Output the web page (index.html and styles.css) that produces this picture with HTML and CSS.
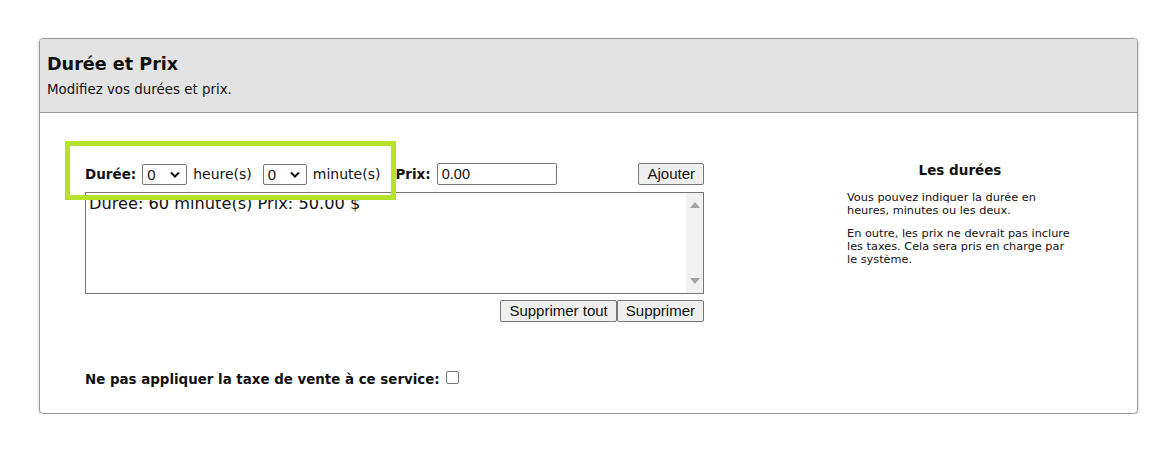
FILE: index.html
```html
<!DOCTYPE html>
<html lang="fr">
<head>
<meta charset="utf-8">
<title>Durée et Prix</title>
<link rel="stylesheet" href="styles.css">
</head>
<body>
<div class="card">
  <div class="card-head">
    <h2 class="title">Durée et Prix</h2>
    <p class="subtitle">Modifiez vos durées et prix.</p>
  </div>
  <div class="card-body">
    <div class="main-col">
      <div class="form-row">
        <label class="lbl">Durée:</label>
        <span class="sel"><span class="sel-val">0</span><svg class="chev" width="10" height="7" viewBox="0 0 10 7"><path d="M1 1.5 L5 5.5 L9 1.5" fill="none" stroke="#111" stroke-width="2"/></svg></span>
        <span class="unit">heure(s)</span>
        <span class="sel sel2"><span class="sel-val">0</span><svg class="chev" width="10" height="7" viewBox="0 0 10 7"><path d="M1 1.5 L5 5.5 L9 1.5" fill="none" stroke="#111" stroke-width="2"/></svg></span>
        <span class="unit unit-last">minute(s)</span>
        <label class="lbl lbl-prix">Prix:</label>
        <span class="input">0.00</span>
        <span class="spacer"></span>
        <button class="btn">Ajouter</button>
      </div>
      <div class="listbox">
        <div class="list-items">
          <div class="option">Durée: 60 minute(s) Prix: 50.00 $</div>
        </div>
        <div class="scrollbar">
          <svg width="10" height="6" viewBox="0 0 10 6"><path d="M0 6 L5 0 L10 6 Z" fill="#a3a3a3"/></svg>
          <svg width="10" height="6" viewBox="0 0 10 6"><path d="M0 0 L5 6 L10 0 Z" fill="#a3a3a3"/></svg>
        </div>
      </div>
      <div class="btn-row">
        <button class="btn">Supprimer tout</button><button class="btn">Supprimer</button>
      </div>
      <div class="tax-row">
        <span class="lbl">Ne pas appliquer la taxe de vente à ce service:</span>
        <span class="checkbox"></span>
      </div>
    </div>
    <div class="side-col">
      <h3 class="side-title">Les durées</h3>
      <p class="side-text">Vous pouvez indiquer la durée en heures, minutes ou les deux.</p>
      <p class="side-text">En outre, les prix ne devrait pas inclure les taxes. Cela sera pris en charge par le système.</p>
    </div>
  </div>
</div>
<div class="highlight"></div>
</body>
</html>
```

FILE: styles.css
```css
* { box-sizing: border-box; }
body {
  margin: 0;
  background: #fff;
  font-family: "DejaVu Sans", Verdana, sans-serif;
  color: #111;
  position: relative;
}
.card {
  margin: 38px 0 0 39px;
  width: 1099px;
  height: 376px;
  border: 1px solid #9a9a9a;
  border-radius: 4px;
  box-shadow: 0 1px 3px rgba(0,0,0,0.25);
  display: flex;
  flex-direction: column;
}
.card-head {
  background: #e3e3e3;
  border-bottom: 1px solid #9a9a9a;
  height: 74px;
  padding: 14px 7px 0;
  border-radius: 3px 3px 0 0;
}
.title {
  margin: 0;
  font-size: 17.6px;
  font-weight: bold;
  line-height: 22px;
}
.subtitle {
  margin: 6px 0 0;
  font-size: 13.4px;
  line-height: 17px;
}
.card-body {
  display: flex;
  padding: 50px 0 0 45px;
}
.main-col {
  width: 619px;
}
.form-row {
  display: flex;
  align-items: center;
  height: 22px;
}
.lbl {
  font-weight: bold;
  font-size: 13.5px;
}
.sel {
  display: inline-flex;
  align-items: center;
  justify-content: space-between;
  width: 45px;
  height: 21px;
  border: 1px solid #767676;
  border-radius: 2px;
  background: #fff;
  padding: 0 6px 0 4px;
  margin-left: 6px;
  font-family: "Liberation Sans", Arial, sans-serif;
  font-size: 15px;
}
.sel2 { width: 44px; }
.unit {
  font-size: 14px;
  margin: 0 5px 0 6px;
}
.unit-last { margin-right: 15px; }
.input {
  display: inline-flex;
  align-items: center;
  width: 120px;
  height: 22px;
  border: 1px solid #767676;
  border-radius: 2px;
  padding: 0 4px;
  margin-left: 6px;
  font-family: "Liberation Sans", Arial, sans-serif;
  font-size: 14.5px;
}
.spacer { flex: 1; }
.btn {
  height: 22px;
  padding: 0 8px;
  border: 1px solid #767676;
  border-radius: 2px;
  background: #efefef;
  font-family: "Liberation Sans", Arial, sans-serif;
  font-size: 15px;
  color: #111;
  line-height: 20px;
}
.listbox {
  margin-top: 7px;
  width: 619px;
  height: 102px;
  border: 1px solid #767676;
  display: flex;
  overflow: hidden;
}
.list-items { flex: 1; padding: 1px 3px; }
.option {
  font-size: 16.2px;
  line-height: 20px;
}
.scrollbar {
  width: 17px;
  background: #f1f1f1;
  display: flex;
  flex-direction: column;
  justify-content: space-between;
  align-items: center;
  padding: 9px 0 9px;
}
.btn-row {
  display: flex;
  justify-content: flex-end;
  margin-top: 6px;
}
.tax-row {
  margin-top: 50px;
  display: flex;
  align-items: center;
}
.tax-row .lbl { font-size: 13.4px; }
.checkbox {
  width: 13px;
  height: 13px;
  border: 1px solid #767676;
  border-radius: 2px;
  margin: -5px 0 0 6px;
  background: #fff;
}
.side-col {
  margin-left: 143px;
  width: 226px;
  padding-top: 0;
}
.side-title {
  margin: 0;
  text-align: center;
  font-size: 13.5px;
  font-weight: bold;
  line-height: 14px;
}
.side-text {
  margin: 14px 0 0;
  font-size: 11.3px;
  line-height: 13px;
}
.side-text + .side-text { margin-top: 10px; }
.highlight {
  position: absolute;
  left: 65px;
  top: 141px;
  width: 331px;
  height: 59px;
  border: 5px solid #b6e22b;
  pointer-events: none;
}
```
